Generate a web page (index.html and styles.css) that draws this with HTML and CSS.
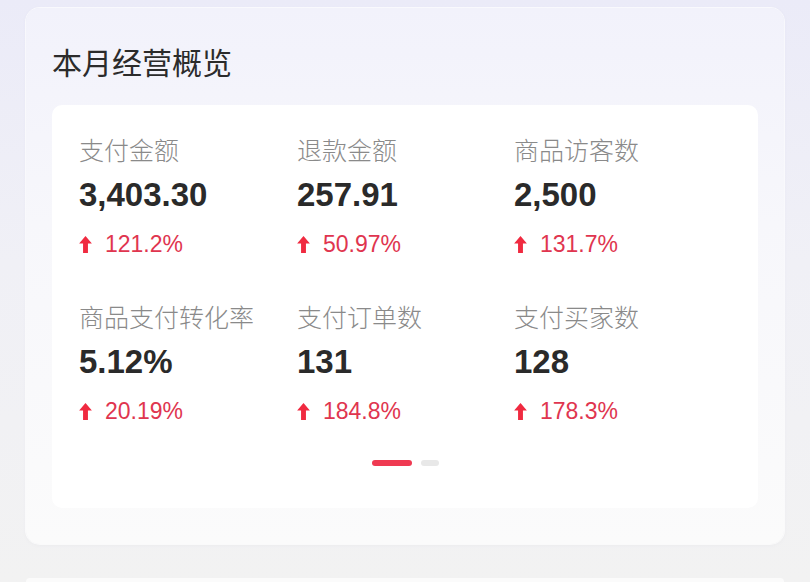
FILE: index.html
```html
<!DOCTYPE html>
<html lang="zh">

<head>
    <meta charset="UTF-8">
    <meta name="viewport" content="width=device-width, initial-scale=1.0">
    <title>本月经营概览</title>
    <link rel="stylesheet" href="styles.css">
</head>

<body>
    <div class="overview">
        <h2 class="overview-title">本月经营概览</h2>
        <div class="panel">
            <div class="stats">
                <div class="stat">
                    <div class="stat-label">支付金额</div>
                    <div class="stat-value">3,403.30</div>
                    <div class="stat-change"><svg class="up" viewBox="0 0 12 16"><path d="M6 0 L12 7 H8.3 V16 H3.7 V7 H0 Z"/></svg>121.2%</div>
                </div>
                <div class="stat">
                    <div class="stat-label">退款金额</div>
                    <div class="stat-value">257.91</div>
                    <div class="stat-change"><svg class="up" viewBox="0 0 12 16"><path d="M6 0 L12 7 H8.3 V16 H3.7 V7 H0 Z"/></svg>50.97%</div>
                </div>
                <div class="stat">
                    <div class="stat-label">商品访客数</div>
                    <div class="stat-value">2,500</div>
                    <div class="stat-change"><svg class="up" viewBox="0 0 12 16"><path d="M6 0 L12 7 H8.3 V16 H3.7 V7 H0 Z"/></svg>131.7%</div>
                </div>
                <div class="stat">
                    <div class="stat-label">商品支付转化率</div>
                    <div class="stat-value">5.12%</div>
                    <div class="stat-change"><svg class="up" viewBox="0 0 12 16"><path d="M6 0 L12 7 H8.3 V16 H3.7 V7 H0 Z"/></svg>20.19%</div>
                </div>
                <div class="stat">
                    <div class="stat-label">支付订单数</div>
                    <div class="stat-value">131</div>
                    <div class="stat-change"><svg class="up" viewBox="0 0 12 16"><path d="M6 0 L12 7 H8.3 V16 H3.7 V7 H0 Z"/></svg>184.8%</div>
                </div>
                <div class="stat">
                    <div class="stat-label">支付买家数</div>
                    <div class="stat-value">128</div>
                    <div class="stat-change"><svg class="up" viewBox="0 0 12 16"><path d="M6 0 L12 7 H8.3 V16 H3.7 V7 H0 Z"/></svg>178.3%</div>
                </div>
            </div>
            <div class="pager">
                <span class="pager-dot active"></span>
                <span class="pager-dot"></span>
            </div>
        </div>
    </div>
    <div class="next-card"></div>
</body>

</html>
```

FILE: styles.css
```css
* {
    margin: 0;
    padding: 0;
    box-sizing: border-box;
}

body {
    width: 810px;
    height: 582px;
    overflow: hidden;
    background: linear-gradient(180deg, #ebebf8 0%, #f0f0f6 45%, #f2f2f2 100%);
    font-family: 'Liberation Sans', 'Noto Sans CJK SC', sans-serif;
    color: #333;
    padding-top: 8px;
}

.overview {
    margin-left: 26px;
    width: 758px;
    padding: 33px 26px 36px;
    border-radius: 14px;
    background: linear-gradient(180deg, #f2f2fb 0%, #f7f7fb 40%, #fbfbfb 100%);
    box-shadow: 0 0 0 1px rgba(255, 255, 255, 0.7), 0 1px 4px rgba(120, 120, 160, 0.06);
}

.overview-title {
    font-family: 'Noto Sans CJK SC', sans-serif;
    font-size: 30px;
    font-weight: 400;
    line-height: 40px;
    color: #2b2b2b;
}

.panel {
    margin-top: 24px;
    background: #fff;
    border-radius: 10px;
    padding: 28px 0 42px 27px;
}

.stats {
    display: grid;
    grid-template-columns: 218px 217px 1fr;
    row-gap: 41px;
}

.stat-label {
    font-family: 'Noto Sans CJK SC', sans-serif;
    font-size: 25px;
    font-weight: 300;
    line-height: 32px;
    color: #8a8a8a;
}

.stat-value {
    margin-top: 10px;
    font-size: 33px;
    font-weight: bold;
    line-height: 40px;
    color: #2a2a2a;
}

.stat-change {
    margin-top: 14px;
    display: flex;
    align-items: center;
    font-size: 23px;
    line-height: 30px;
    color: #e0354f;
}

.up {
    width: 13px;
    height: 17px;
    margin-right: 13px;
    fill: #f02a40;
}

.pager {
    margin-top: 34px;
    margin-left: -27px;
    display: flex;
    justify-content: center;
    gap: 9px;
}

.pager-dot {
    width: 18px;
    height: 6px;
    border-radius: 3px;
    background: #e8e8e8;
}

.pager-dot.active {
    width: 40px;
    background: #ef3a52;
}

.next-card {
    margin: 34px 0 0 26px;
    width: 758px;
    height: 4px;
    border-radius: 14px 14px 0 0;
    background: #fbfbfb;
}
```
